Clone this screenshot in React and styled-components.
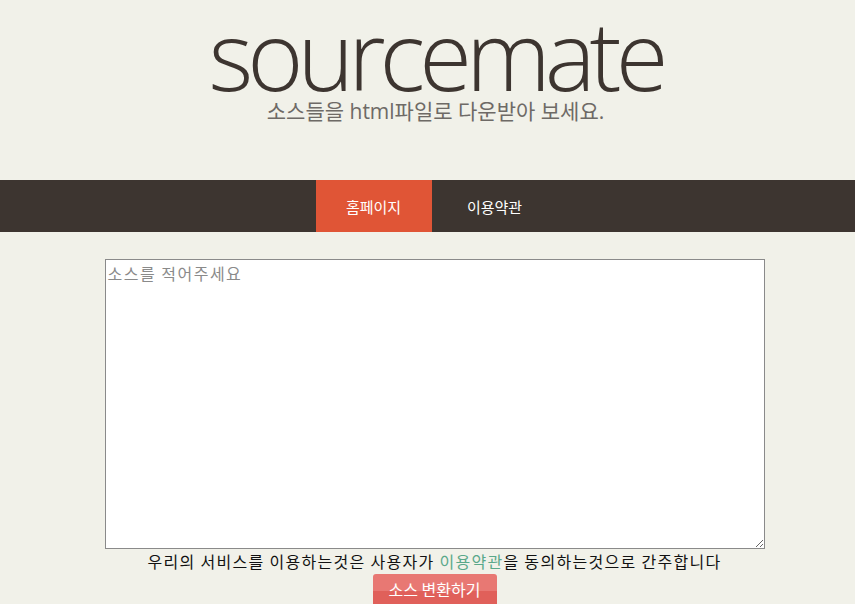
import React from 'react';
import styled, { createGlobalStyle } from 'styled-components';

const GlobalStyle = createGlobalStyle`
  body {
    margin: 0;
    background: #f1f1e9;
    font-family: "Open Sans", "Noto Sans CJK KR", sans-serif;
  }
`;

const Header = styled.header`
  height: 180px;
  padding-left: 16px;
  display: flex;
  flex-direction: column;
  align-items: center;
`;

const Logo = styled.h1`
  margin: 10px 0 0;
  font-family: "Open Sans", sans-serif;
  font-weight: 300;
  font-size: 96px;
  line-height: 88px;
  letter-spacing: -6px;
  color: #3d3530;
`;

const Tagline = styled.p`
  margin: 0;
  font-family: "Open Sans", "Noto Sans CJK KR", sans-serif;
  font-size: 21px;
  line-height: 26px;
  color: #6e6a66;
`;

const Nav = styled.nav`
  height: 52px;
  background: #3d3530;
  display: flex;
  justify-content: center;
  padding-left: 18px;
`;

const Tab = styled.a`
  display: flex;
  align-items: center;
  justify-content: center;
  width: ${p => p.$w}px;
  background: ${p => (p.$active ? '#e05536' : 'transparent')};
  color: #fff;
  font-family: "Noto Sans CJK KR", sans-serif;
  font-size: 15px;
  text-decoration: none;
`;

const Main = styled.main`
  display: flex;
  flex-direction: column;
  align-items: center;
  padding: 27px 0 0 14px;
`;

const SourceInput = styled.textarea`
  box-sizing: border-box;
  width: 660px;
  height: 290px;
  border: 1px solid #8a8a8a;
  background: #fff;
  padding: 1px 2px;
  font-family: "Noto Sans CJK KR", sans-serif;
  font-size: 16px;
  letter-spacing: 1.5px;
  display: block;
  &::placeholder {
    color: #8a8a8a;
  }
`;

const Notice = styled.p`
  margin: 1px 0 0;
  font-family: "Noto Sans CJK KR", sans-serif;
  font-size: 16px;
  letter-spacing: 1.3px;
  color: #111;
  line-height: 22px;
`;

const TermsLink = styled.span`
  color: #5aa88a;
`;

const Convert = styled.button`
  margin-top: 2px;
  width: 124px;
  height: 34px;
  border: none;
  border-radius: 3px;
  background: linear-gradient(#e87873 0%, #e87873 50%, #e0605a 51%, #e0605a 100%);
  color: #fff;
  font-family: "Noto Sans CJK KR", sans-serif;
  font-size: 16px;
  padding: 0 0 5px;
`;

export default function App() {
  return (
    <>
      <GlobalStyle />
      <Header>
        <Logo>sourcemate</Logo>
        <Tagline>소스들을 html파일로 다운받아 보세요.</Tagline>
      </Header>
      <Nav>
        <Tab $active $w={116} href="#">홈페이지</Tab>
        <Tab $w={126} href="#">이용약관</Tab>
      </Nav>
      <Main>
        <SourceInput placeholder="소스를 적어주세요" />
        <Notice>
          우리의 서비스를 이용하는것은 사용자가 <TermsLink>이용약관</TermsLink>을 동의하는것으로 간주합니다
        </Notice>
        <Convert>소스 변환하기</Convert>
      </Main>
    </>
  );
}
